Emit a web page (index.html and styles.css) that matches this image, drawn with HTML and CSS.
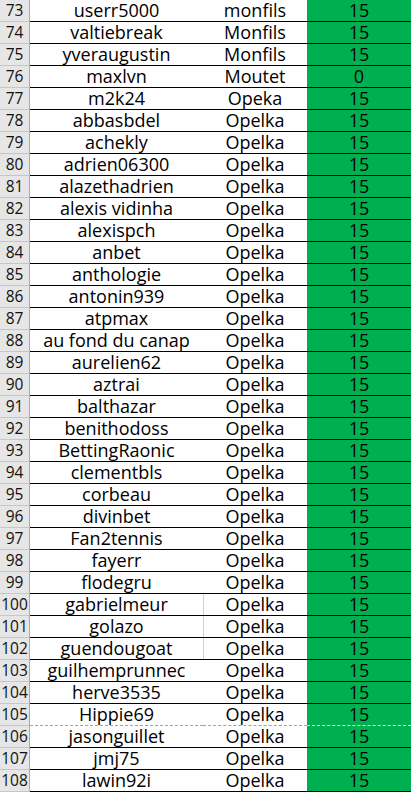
FILE: index.html
```html
<!DOCTYPE html>
<html>
<head>
<meta charset="utf-8">
<link rel="stylesheet" href="styles.css">
</head>
<body>
<div class="sheet">
<div class="row"><div class="hd">73</div><div class="c b">userr5000</div><div class="c">monfils</div><div class="c d">15</div></div>
<div class="row"><div class="hd">74</div><div class="c b">valtiebreak</div><div class="c">Monfils</div><div class="c d">15</div></div>
<div class="row"><div class="hd">75</div><div class="c b">yveraugustin</div><div class="c">Monfils</div><div class="c d">15</div></div>
<div class="row"><div class="hd">76</div><div class="c b">maxlvn</div><div class="c">Moutet</div><div class="c d">0</div></div>
<div class="row"><div class="hd">77</div><div class="c b">m2k24</div><div class="c">Opeka</div><div class="c d">15</div></div>
<div class="row"><div class="hd">78</div><div class="c b">abbasbdel</div><div class="c">Opelka</div><div class="c d">15</div></div>
<div class="row"><div class="hd">79</div><div class="c b">achekly</div><div class="c">Opelka</div><div class="c d">15</div></div>
<div class="row"><div class="hd">80</div><div class="c b">adrien06300</div><div class="c">Opelka</div><div class="c d">15</div></div>
<div class="row"><div class="hd">81</div><div class="c b">alazethadrien</div><div class="c">Opelka</div><div class="c d">15</div></div>
<div class="row"><div class="hd">82</div><div class="c b">alexis vidinha</div><div class="c">Opelka</div><div class="c d">15</div></div>
<div class="row"><div class="hd">83</div><div class="c b">alexispch</div><div class="c">Opelka</div><div class="c d">15</div></div>
<div class="row"><div class="hd">84</div><div class="c b">anbet</div><div class="c">Opelka</div><div class="c d">15</div></div>
<div class="row"><div class="hd">85</div><div class="c b">anthologie</div><div class="c">Opelka</div><div class="c d">15</div></div>
<div class="row"><div class="hd">86</div><div class="c b">antonin939</div><div class="c">Opelka</div><div class="c d">15</div></div>
<div class="row"><div class="hd">87</div><div class="c b">atpmax</div><div class="c">Opelka</div><div class="c d">15</div></div>
<div class="row"><div class="hd">88</div><div class="c b">au fond du canap</div><div class="c">Opelka</div><div class="c d">15</div></div>
<div class="row"><div class="hd">89</div><div class="c b">aurelien62</div><div class="c">Opelka</div><div class="c d">15</div></div>
<div class="row"><div class="hd">90</div><div class="c b">aztrai</div><div class="c">Opelka</div><div class="c d">15</div></div>
<div class="row"><div class="hd">91</div><div class="c b">balthazar</div><div class="c">Opelka</div><div class="c d">15</div></div>
<div class="row"><div class="hd">92</div><div class="c b">benithodoss</div><div class="c">Opelka</div><div class="c d">15</div></div>
<div class="row"><div class="hd">93</div><div class="c b">BettingRaonic</div><div class="c">Opelka</div><div class="c d">15</div></div>
<div class="row"><div class="hd">94</div><div class="c b">clementbls</div><div class="c">Opelka</div><div class="c d">15</div></div>
<div class="row"><div class="hd">95</div><div class="c b">corbeau</div><div class="c">Opelka</div><div class="c d">15</div></div>
<div class="row"><div class="hd">96</div><div class="c b">divinbet</div><div class="c">Opelka</div><div class="c d">15</div></div>
<div class="row"><div class="hd">97</div><div class="c b">Fan2tennis</div><div class="c">Opelka</div><div class="c d">15</div></div>
<div class="row"><div class="hd">98</div><div class="c b">fayerr</div><div class="c">Opelka</div><div class="c d">15</div></div>
<div class="row"><div class="hd">99</div><div class="c b">flodegru</div><div class="c">Opelka</div><div class="c d">15</div></div>
<div class="row vl"><div class="hd">100</div><div class="c b">gabrielmeur</div><div class="c">Opelka</div><div class="c d">15</div></div>
<div class="row vl"><div class="hd">101</div><div class="c b">golazo</div><div class="c">Opelka</div><div class="c d">15</div></div>
<div class="row vl"><div class="hd">102</div><div class="c b">guendougoat</div><div class="c">Opelka</div><div class="c d">15</div></div>
<div class="row"><div class="hd">103</div><div class="c b">guilhemprunnec</div><div class="c">Opelka</div><div class="c d">15</div></div>
<div class="row"><div class="hd">104</div><div class="c b">herve3535</div><div class="c">Opelka</div><div class="c d">15</div></div>
<div class="row brk"><div class="hd">105</div><div class="c b">Hippie69</div><div class="c">Opelka</div><div class="c d">15</div></div>
<div class="row"><div class="hd">106</div><div class="c b">jasonguillet</div><div class="c">Opelka</div><div class="c d">15</div></div>
<div class="row"><div class="hd">107</div><div class="c b">jmj75</div><div class="c">Opelka</div><div class="c d">15</div></div>
<div class="row"><div class="hd">108</div><div class="c b">lawin92i</div><div class="c">Opelka</div><div class="c d">15</div></div>
</div>
</body>
</html>
```
FILE: styles.css
```css
html, body {
  margin: 0;
  padding: 0;
  background: #ffffff;
  overflow: hidden;
}
.sheet {
  width: 411px;
  font-family: "Open Sans", Lato, sans-serif;
  font-size: 18px;
  color: #000;
}
.row {
  display: grid;
  grid-template-columns: 30px 173px 104px 104px;
  height: 22px;
}
.hd {
  background: #e6e6e6;
  border-right: 1px solid #a9a9a9;
  border-bottom: 1px solid #c6c6c6;
  text-align: center;
  line-height: 21px;
  font-size: 15.5px;
  color: #111;
}
.c {
  border-bottom: 1px solid #000;
  text-align: center;
  line-height: 21px;
  white-space: nowrap;
  overflow: visible;
}
.d {
  background: #00b050;
}
.vl .c.b + .c {
  box-shadow: inset 1px 0 0 #d0d0d0;
}
.brk .c {
  border-bottom: 1px dashed #a0a0a0;
}
.brk .c.d {
  border-bottom: 1px dashed #d8eedf;
}
```
